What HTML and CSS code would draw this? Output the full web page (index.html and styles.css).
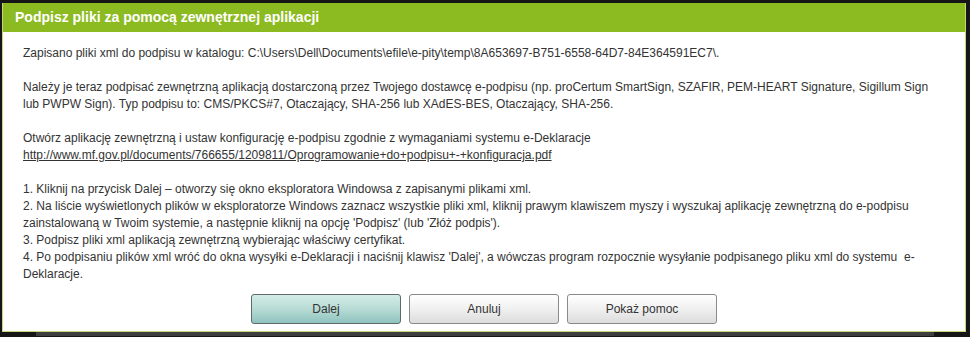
FILE: index.html
```html
<!DOCTYPE html>
<html lang="pl">

<head>
    <meta charset="UTF-8">
    <title>Podpisz pliki za pomocą zewnętrznej aplikacji</title>
    <link rel="stylesheet" href="styles.css">
</head>

<body>
    <div class="sign-dialog">
        <div class="sign-dialog-title">Podpisz pliki za pomocą zewnętrznej aplikacji</div>
        <div class="sign-dialog-body">
            <p>Zapisano pliki xml do podpisu w katalogu: C:\Users\Dell\Documents\efile\e-pity\temp\8A653697-B751-6558-64D7-84E364591EC7\.</p>
            <p>Należy je teraz podpisać zewnętrzną aplikacją dostarczoną przez Twojego dostawcę e-podpisu (np. proCertum SmartSign, SZAFIR, PEM-HEART Signature, Sigillum Sign lub PWPW Sign). Typ podpisu to: CMS/PKCS#7, Otaczający, SHA-256 lub XAdES-BES, Otaczający, SHA-256.</p>
            <p>Otwórz aplikację zewnętrzną i ustaw konfigurację e-podpisu zgodnie z wymaganiami systemu e-Deklaracje<br>
                <a href="#" class="sign-link">http://www.mf.gov.pl/documents/766655/1209811/Oprogramowanie+do+podpisu+-+konfiguracja.pdf</a>
            </p>
            <p>1. Kliknij na przycisk Dalej – otworzy się okno eksploratora Windowsa z zapisanymi plikami xml.<br>
                2. Na liście wyświetlonych plików w eksploratorze Windows zaznacz wszystkie pliki xml, kliknij prawym klawiszem myszy i wyszukaj aplikację zewnętrzną do e-podpisu zainstalowaną w Twoim systemie, a następnie kliknij na opcję 'Podpisz' (lub 'Złóż podpis').<br>
                3. Podpisz pliki xml aplikacją zewnętrzną wybierając właściwy certyfikat.<br>
                4. Po podpisaniu plików xml wróć do okna wysyłki e-Deklaracji i naciśnij klawisz 'Dalej', a wówczas program rozpocznie wysyłanie podpisanego pliku xml do systemu &nbsp;e-Deklaracje.</p>
        </div>
        <div class="sign-dialog-buttons">
            <button class="sign-btn sign-btn-primary">Dalej</button>
            <button class="sign-btn">Anuluj</button>
            <button class="sign-btn">Pokaż pomoc</button>
        </div>
    </div>
    <div class="page-strip"></div>
</body>

</html>
```

FILE: styles.css
```css
body {
    margin: 0;
    padding: 3px 0 0 2px;
    background-color: #161616;
    font-family: "Liberation Sans", Arial, sans-serif;
    font-size: 12px;
    color: #333;
}

.sign-dialog {
    width: 962px;
    background-color: #fff;
    border: 1px solid #c9d77a;
    border-top: none;
}

.sign-dialog-title {
    height: 29px;
    line-height: 29px;
    padding-left: 12px;
    background-color: #8cba21;
    color: #fff;
    font-weight: bold;
    font-size: 14px;
}

.sign-dialog-body {
    padding: 13px 20px 0 20px;
    line-height: 17px;
}

.sign-dialog-body p {
    margin: 0 0 17px 0;
}

.sign-dialog-body p:last-child {
    margin-bottom: 0;
}

.sign-link {
    color: #333;
    text-decoration: underline;
}

.sign-dialog-buttons {
    display: flex;
    justify-content: center;
    gap: 8px;
    padding: 11px 0 7px 0;
}

.sign-btn {
    width: 150px;
    height: 30px;
    border: 1px solid #8a8a8a;
    border-radius: 3px;
    background: linear-gradient(#ffffff, #f0f0f0 50%, #dcdcdc);
    font-family: "Liberation Sans", Arial, sans-serif;
    font-size: 12px;
    color: #333;
    cursor: pointer;
}

.sign-btn-primary {
    border-color: #5f6b6b;
    background: linear-gradient(#d3ece6, #b7dcd5 50%, #8fc3bf);
}

.page-strip {
    height: 4px;
    margin: 0 36px 0 34px;
    background-color: #3e3e3e;
}
```
